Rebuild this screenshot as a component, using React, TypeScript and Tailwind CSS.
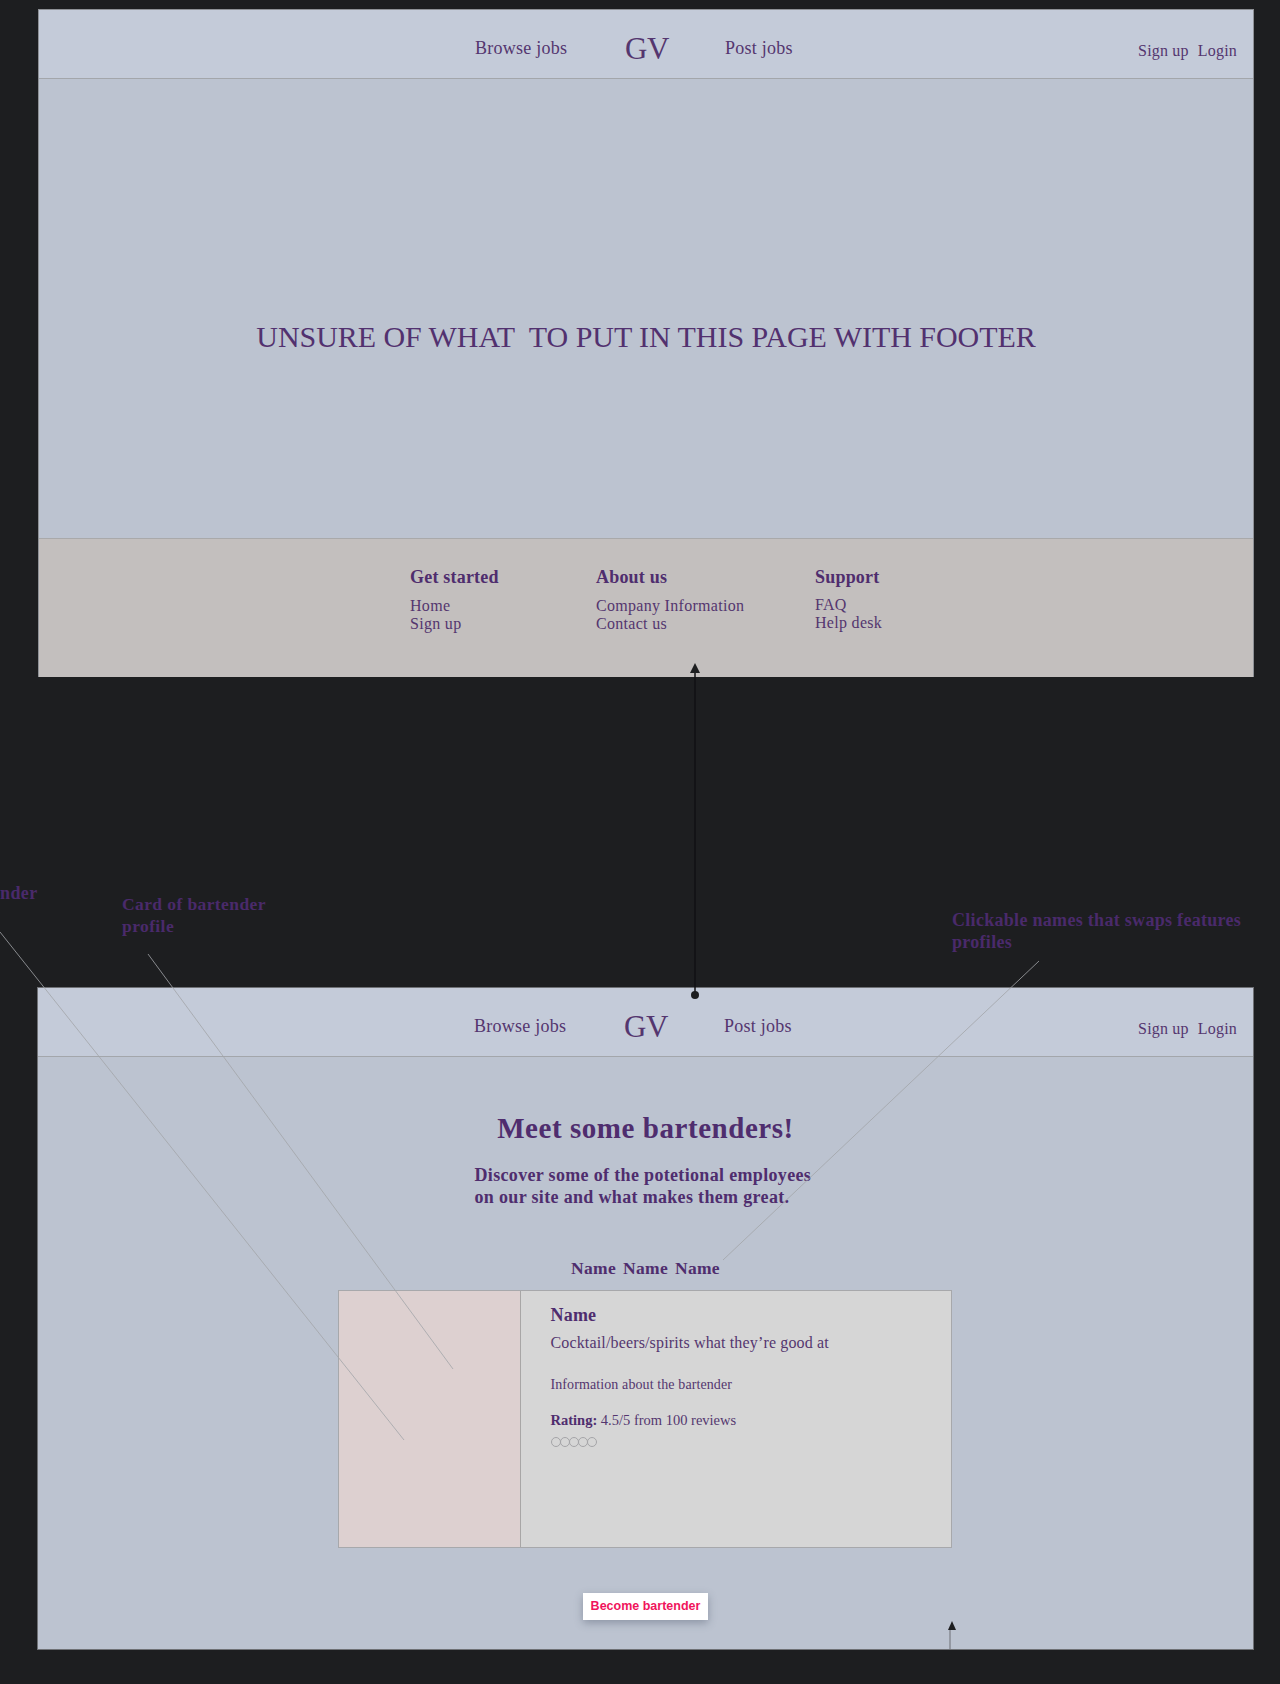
const footerGroups = [
  { title: "Get started", width: "w-[186px]", list: "mt-[9px]", links: ["Home", "Sign up"] },
  { title: "About us", width: "w-[219px]", list: "mt-[9px]", links: ["Company Information", "Contact us"] },
  { title: "Support", width: "w-auto", list: "mt-[8px]", links: ["FAQ", "Help desk"] },
];

function Nav() {
  return (
    <nav className="h-[69px] flex bg-[#c4cbd9] border-b border-[#a3a6ab] text-[#54366f]">
      <div className="flex items-center pl-[436px] pt-[9px]">
        <a className="text-[18px] tracking-[0.25px] w-[150px]">Browse jobs</a>
        <a className="text-[31px] leading-none w-[100px] tracking-[-0.5px]">GV</a>
        <a className="text-[18px] tracking-[0.25px]">Post jobs</a>
      </div>
      <div className="ml-auto flex items-center gap-[9px] pr-[16px] pt-[13px] text-[16px] tracking-[0.2px]">
        <a>Sign up</a>
        <a>Login</a>
      </div>
    </nav>
  );
}

function Stars() {
  return (
    <div className="flex mt-[8px]">
      {[0, 1, 2, 3, 4].map((i) => (
        <span key={i} className="w-[10px] h-[10px] -mr-[1px] rounded-full border border-[#a5a5a8]" />
      ))}
    </div>
  );
}

export default function App() {
  return (
    <div className="relative w-[1280px] h-[1684px] overflow-hidden bg-[#1d1e20] font-['Liberation_Serif',serif] pt-[9px]">
      <section className="ml-[38px] w-[1216px] h-[668px] flex flex-col border border-[#8e9196] border-b-0">
        <Nav />
        <main className="h-[459px] flex items-center justify-center bg-[#bcc3d0] pt-[57px]">
          <h1 className="text-[30px] leading-none text-[#52316f] whitespace-pre tracking-[-0.05px]">
            UNSURE OF WHAT  TO PUT IN THIS PAGE WITH FOOTER
          </h1>
        </main>
        <footer className="flex-1 flex bg-[#c3bfbe] border-t border-[#a9a9aa] pl-[371px] pt-[27px] text-[#54366f]">
          {footerGroups.map((g) => (
            <div key={g.title} className={g.width}>
              <p className="text-[18px] leading-[22px] font-bold tracking-[0.2px] text-[#4f2d6e]">{g.title}</p>
              <ul className={`${g.list} text-[16px] leading-[18px] tracking-[0.3px]`}>
                {g.links.map((l) => (
                  <li key={l}>{l}</li>
                ))}
              </ul>
            </div>
          ))}
        </footer>
      </section>

      <section className="mt-[310px] ml-[37px] w-[1217px] h-[663px] flex flex-col border border-[#6f7175]">
        <Nav />
        <main className="flex-1 flex flex-col items-center bg-[#bcc3d0] text-[#4f2d6e]">
          <h2 className="mt-[53px] text-[29px] leading-[36px] font-bold tracking-[0.55px]">Meet some bartenders!</h2>
          <p className="mt-[18px] w-[342px] whitespace-nowrap text-[18px] leading-[22px] font-bold tracking-[0.33px]">
            Discover some of the potetional employees
            <br />
            on our site and what makes them great.
          </p>
          <div className="mt-[49px] flex gap-[7px] text-[17.5px] leading-[22px] font-bold tracking-[0.3px]">
            <span>Name</span>
            <span>Name</span>
            <span>Name</span>
          </div>
          <article className="mt-[11px] ml-[-2px] w-[614px] h-[258px] flex border border-[#a7a8ab] bg-[#d6d6d6]">
            <div className="w-[182px] bg-[#ddd0d0] border-r border-[#a8a6a6]" />
            <div className="pl-[30px] pt-[13px] text-[#54366f]">
              <p className="text-[18px] leading-[22px] font-bold text-[#4f2d6e] tracking-[0.2px]">Name</p>
              <p className="mt-[7px] text-[16px] leading-[20px] tracking-[0.15px]">
                Cocktail/beers/spirits what they’re good at
              </p>
              <p className="mt-[23px] text-[14px] leading-[17px] tracking-[0.1px]">Information about the bartender</p>
              <p className="mt-[18px] text-[14.5px] leading-[18px]">
                <b className="text-[#4f2d6e]">Rating:</b> 4.5/5 from 100 reviews
              </p>
              <Stars />
            </div>
          </article>
          <button className="mt-[45px] w-[125px] h-[27px] bg-white shadow-[0_3px_8px_rgba(70,80,100,0.4)] font-['Liberation_Sans',sans-serif] text-[12.5px] font-bold text-[#f0145c]">
            Become bartender
          </button>
        </main>
      </section>

      {/* annotations laid over the two frames */}
      <p className="absolute left-0 top-[882px] text-[18px] leading-[22px] font-bold tracking-[0.4px] text-[#4a2a6b]">nder</p>
      <p className="absolute left-[122px] top-[893px] w-[170px] text-[17.5px] leading-[22px] font-bold tracking-[0.4px] text-[#4a2a6b]">
        Card of bartender profile
      </p>
      <p className="absolute left-[952px] top-[909px] w-[300px] text-[18px] leading-[22px] font-bold tracking-[0.3px] text-[#4a2a6b]">
        Clickable names that swaps features profiles
      </p>
      <svg className="absolute left-0 top-0 pointer-events-none" width="1280" height="1684" fill="none">
        <path d="M0 932 L404 1440" stroke="#a3a5a9" strokeOpacity="0.8" />
        <path d="M148 954 L453 1369" stroke="#a3a5a9" strokeOpacity="0.8" />
        <path d="M1039 961 L723 1260" stroke="#a3a5a9" strokeOpacity="0.8" />
        <path d="M695 670 V995" stroke="#101113" strokeWidth="1.5" />
        <circle cx="695" cy="995" r="4" fill="#1d1e20" />
        <path d="M695 663 L700 673 H690 Z" fill="#1d1e20" />
        <path d="M950 1628 V1650" stroke="#6d6f74" />
        <path d="M952 1621 L956 1630 H948 Z" fill="#1d1e20" />
      </svg>
    </div>
  );
}
